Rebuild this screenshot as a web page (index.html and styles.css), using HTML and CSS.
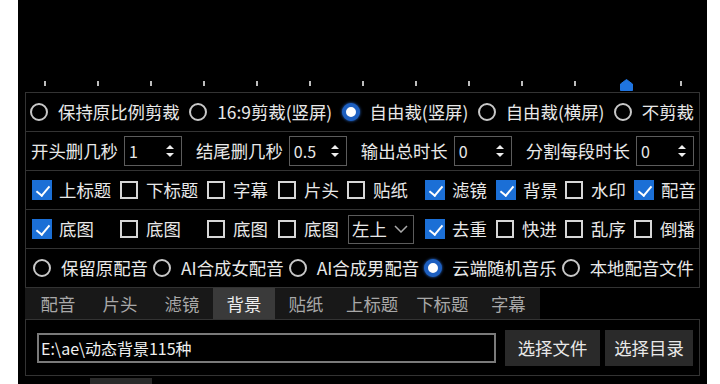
FILE: index.html
```html
<!DOCTYPE html>
<html lang="zh">
<head>
    <meta charset="UTF-8">
    <title>剪辑设置</title>
    <link rel="stylesheet" href="styles.css">
</head>
<body>
    <div class="panel">
        <div class="slider">
            <div class="ticks">
                <i></i><i></i><i></i><i></i><i></i><i></i><i></i><i></i><i></i><i></i><i></i><i class="hidden"></i><i></i>
            </div>
            <svg class="handle" width="13" height="12" viewBox="0 0 13 12"><path d="M6.5 0.5 L12.5 5 L12.5 11.5 L0.5 11.5 L0.5 5 Z" fill="#1f74e0" stroke="#1f74e0" stroke-linejoin="round"/></svg>
        </div>

        <div class="rows">
            <div class="row row-crop">
                <label class="radio"><span class="dot"></span>保持原比例剪裁</label>
                <label class="radio"><span class="dot"></span>16:9剪裁(竖屏)</label>
                <label class="radio"><span class="dot on"></span>自由裁(竖屏)</label>
                <label class="radio"><span class="dot"></span>自由裁(横屏)</label>
                <label class="radio"><span class="dot"></span>不剪裁</label>
            </div>

            <div class="row row-time">
                <div class="field">开头删几秒<div class="spin"><span>1</span><svg width="10" height="14" viewBox="0 0 10 14"><path d="M1 5 L5 1 L9 5 Z M1 9 L5 13 L9 9 Z" fill="#eee"/></svg></div></div>
                <div class="field">结尾删几秒<div class="spin"><span>0.5</span><svg width="10" height="14" viewBox="0 0 10 14"><path d="M1 5 L5 1 L9 5 Z M1 9 L5 13 L9 9 Z" fill="#eee"/></svg></div></div>
                <div class="field">输出总时长<div class="spin"><span>0</span><svg width="10" height="14" viewBox="0 0 10 14"><path d="M1 5 L5 1 L9 5 Z M1 9 L5 13 L9 9 Z" fill="#eee"/></svg></div></div>
                <div class="field">分割每段时长<div class="spin"><span>0</span><svg width="10" height="14" viewBox="0 0 10 14"><path d="M1 5 L5 1 L9 5 Z M1 9 L5 13 L9 9 Z" fill="#eee"/></svg></div></div>
            </div>

            <div class="row row-grid">
                <label class="check"><span class="box on"></span>上标题</label>
                <label class="check"><span class="box"></span>下标题</label>
                <label class="check"><span class="box"></span>字幕</label>
                <label class="check"><span class="box"></span>片头</label>
                <label class="check"><span class="box"></span>贴纸</label>
                <label class="check"><span class="box on"></span>滤镜</label>
                <label class="check"><span class="box on"></span>背景</label>
                <label class="check"><span class="box"></span>水印</label>
                <label class="check"><span class="box on"></span>配音</label>
            </div>

            <div class="row row-grid">
                <label class="check"><span class="box on"></span>底图</label>
                <label class="check"><span class="box"></span>底图</label>
                <label class="check"><span class="box"></span>底图</label>
                <label class="check"><span class="box"></span>底图</label>
                <div class="select">左上<svg width="14" height="8" viewBox="0 0 14 8"><path d="M1 1 L7 7 L13 1" fill="none" stroke="#aaa" stroke-width="1.5"/></svg></div>
                <label class="check"><span class="box on"></span>去重</label>
                <label class="check"><span class="box"></span>快进</label>
                <label class="check"><span class="box"></span>乱序</label>
                <label class="check"><span class="box"></span>倒播</label>
            </div>

            <div class="row row-voice">
                <label class="radio"><span class="dot"></span>保留原配音</label>
                <label class="radio"><span class="dot"></span>AI合成女配音</label>
                <label class="radio"><span class="dot"></span>AI合成男配音</label>
                <label class="radio"><span class="dot on"></span>云端随机音乐</label>
                <label class="radio"><span class="dot"></span>本地配音文件</label>
            </div>
        </div>

        <div class="tabs">
            <span class="tab">配音</span>
            <span class="tab">片头</span>
            <span class="tab">滤镜</span>
            <span class="tab active">背景</span>
            <span class="tab">贴纸</span>
            <span class="tab">上标题</span>
            <span class="tab">下标题</span>
            <span class="tab">字幕</span>
        </div>

        <div class="tab-body">
            <div class="path">E:\ae\动态背景115种</div>
            <button class="btn btn-file">选择文件</button>
            <button class="btn btn-dir">选择目录</button>
        </div>

        <div class="more">
            <span class="more-tab"></span>
        </div>
    </div>
</body>
</html>
```

FILE: styles.css
```css
* {
    box-sizing: border-box;
}

body {
    margin: 0;
    background: #fff;
    font-family: "Noto Sans CJK SC", "Noto Sans", sans-serif;
    font-size: 17.4px;
    color: #e8e8e8;
}

.panel {
    margin-left: 18px;
    width: 689px;
    height: 384px;
    background: #000;
    overflow: hidden;
}

/* 进度条 */
.slider {
    height: 92px;
    position: relative;
    display: flex;
    align-items: flex-end;
    padding-bottom: 6px;
}

.ticks {
    flex: 1;
    display: flex;
    justify-content: space-between;
    padding: 0 25px 0 26px;
}

.ticks i {
    width: 2px;
    height: 5px;
    background: #bdbdbd;
}

.ticks i.hidden {
    visibility: hidden;
}

.handle {
    position: absolute;
    left: 602px;
    top: 79px;
}

/* 设置行 */
.rows {
    margin: 0 7px;
    border: 1px solid #333;
    border-bottom: none;
}

.row {
    height: 39px;
    border-bottom: 1px solid #333;
    display: flex;
    align-items: center;
    line-height: 20px;
    white-space: nowrap;
}

.row-crop {
    justify-content: space-between;
    padding: 0 5px 0 4px;
}

.row-voice {
    justify-content: space-between;
    padding: 0 5px 0 7px;
}

.row-time {
    justify-content: space-between;
    padding: 0 5px 0 5px;
}

.row-grid {
    display: grid;
    grid-template-columns: 88px 87px 71px 69px 78px 71px 69px 69px 1fr;
    align-items: center;
    padding-left: 6px;
}

.radio,
.check {
    display: flex;
    align-items: center;
}

.dot {
    width: 18px;
    height: 18px;
    border: 2px solid #c8c8c8;
    border-radius: 50%;
    margin-right: 10px;
    flex-shrink: 0;
}

.dot.on {
    border: 4px solid #1d5fc0;
    background: #fff;
    box-shadow: 0 0 3px #2a6fd8;
}

.box {
    width: 18px;
    height: 18px;
    border: 2px solid #d6d6d6;
    margin-right: 8px;
    flex-shrink: 0;
    position: relative;
}

.box.on {
    width: 20px;
    height: 20px;
    margin-right: 7px;
    background: #1b6fd6;
    border-color: #1b6fd6;
}

.box.on::after {
    content: "";
    position: absolute;
    left: 5px;
    top: 1px;
    width: 6px;
    height: 11px;
    border-right: 2px solid #fff;
    border-bottom: 2px solid #fff;
    transform: rotate(40deg);
}

.field {
    display: flex;
    align-items: center;
    gap: 6px;
}

.spin {
    width: 58px;
    height: 30px;
    border: 1px solid #5c5c5c;
    display: flex;
    align-items: center;
    justify-content: space-between;
    padding: 0 6px 0 4px;
    font-size: 16px;
}

.select {
    width: 66px;
    height: 29px;
    margin-left: 1px;
    border: 1px solid #5c5c5c;
    display: flex;
    align-items: center;
    justify-content: space-between;
    padding: 0 5px 0 3px;
}

/* 标签页 */
.tabs {
    margin-left: 7px;
    width: 515px;
    height: 31px;
    background: #181818;
    display: flex;
    padding-left: 2px;
}

.tab {
    min-width: 62px;
    padding: 0 9px;
    text-align: center;
    line-height: 31px;
    color: #a8a8a8;
}

.tab.active {
    background: #3a3a3a;
    color: #eee;
}

.tab-body {
    margin: 0 7px;
    height: 57px;
    border: 1px solid #333;
    display: flex;
    align-items: center;
    padding-left: 11px;
}

.path {
    width: 459px;
    height: 30px;
    border: 2px solid #7a7a7a;
    font-size: 16px;
    line-height: 26px;
    padding-left: 2px;
    color: #f0f0f0;
}

.btn {
    height: 36px;
    border: none;
    background: #2a2a2a;
    color: #e8e8e8;
    font-family: inherit;
    font-size: 17.4px;
    padding: 0;
}

.btn-file {
    width: 95px;
    margin-left: 9px;
}

.btn-dir {
    width: 88px;
    margin-left: 5px;
}

.more {
    margin: 0 7px;
    height: 20px;
    padding: 2px 0 0 65px;
}

.more-tab {
    display: block;
    width: 62px;
    height: 18px;
    background: #2a2a2a;
}
```
